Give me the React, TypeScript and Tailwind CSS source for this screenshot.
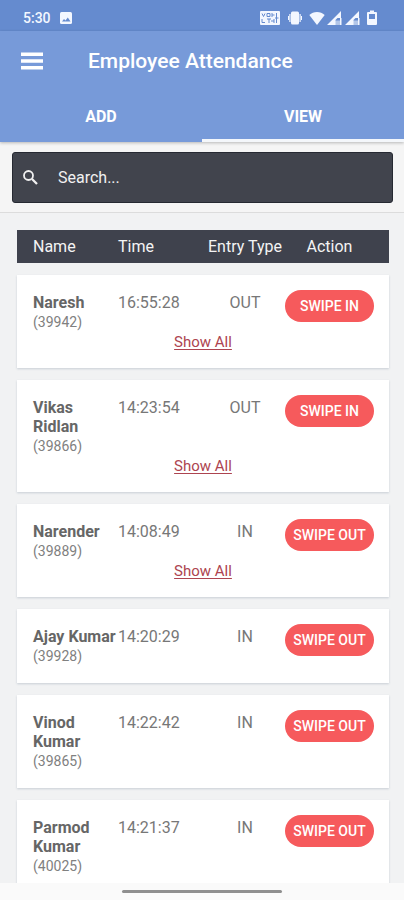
import React, { useState } from 'react'

type Entry = {
  id: number;
  name: string;
  time: string;
  type: 'IN' | 'OUT';
  showAll?: boolean;
};

const entries: Entry[] = [
  { id: 39942, name: 'Naresh', time: '16:55:28', type: 'OUT', showAll: true },
  { id: 39866, name: 'Vikas Ridlan', time: '14:23:54', type: 'OUT', showAll: true },
  { id: 39889, name: 'Narender', time: '14:08:49', type: 'IN', showAll: true },
  { id: 39928, name: 'Ajay Kumar', time: '14:20:29', type: 'IN' },
  { id: 39865, name: 'Vinod Kumar', time: '14:22:42', type: 'IN' },
  { id: 40025, name: 'Parmod Kumar', time: '14:21:37', type: 'IN' },
];

const SignalIcon = () => (
  <svg width="15" height="14" viewBox="0 0 15 14" fill="currentColor" aria-hidden="true">
    <path d="M0 14 14 0v7h-3.500l-2 2v5z" />
    <path d="M8 9.500h6v4.500H8z" opacity=".55" />
    <path d="M13 7h1.500v7H13z" />
  </svg>
);

const StatusBar = () => (
  <div className="flex h-[31px] shrink-0 items-center justify-between bg-[#658bcf] pt-1 pr-[26px] pl-[23px] text-[#f3f7ff]">
    <div className="flex items-center gap-2">
      <span className="text-sm leading-5 font-medium">5:30</span>
      <svg width="14" height="14" viewBox="0 0 14 14" aria-hidden="true">
        <rect x="1" y="1" width="12" height="12" rx="1.500" fill="currentColor" />
        <path d="M3 10.500 5 8l1.500 1.500L8.800 6.500 11.500 10.500z" fill="#658bcf" />
      </svg>
    </div>
    <div className="flex items-center">
      {/* VoLTE */}
      <svg className="mr-2" width="20" height="14" viewBox="0 0 20 14" aria-hidden="true">
        <rect width="20" height="14" rx="1" fill="currentColor" />
        <path d="M2 2.500l1.500 3L5 2.500M7 2.500h3v3H7zM12 2v4M12 4h2.500M2 8v3.500h3M7 8h4M9 8v4M11 10h3M14 8v4M16.500 2v10M15 7h3.500" fill="none" stroke="#658bcf" />
      </svg>
      {/* vibrate */}
      <svg className="mr-[7px]" width="14" height="14" viewBox="0 0 14 14" fill="currentColor" aria-hidden="true">
        <rect x="3" y="0.500" width="8" height="13" rx="1.500" />
        <path d="M1.300 3h1.200v8H1.300zM11.500 3h1.200v8h-1.200zM0 5h1v4H0zM13 5h1v4h-1z" />
      </svg>
      {/* wifi */}
      <svg className="mr-[2px]" width="16" height="14" viewBox="0 0 16 14" fill="currentColor" aria-hidden="true">
        <path d="M8 14 .3 4C2.500 2 5 1 8 1s5.500 1 7.700 3z" />
      </svg>
      <div className="flex gap-[3px]">
        <SignalIcon />
        <SignalIcon />
      </div>
      {/* battery */}
      <svg className="ml-[6px]" width="12" height="16" viewBox="0 0 12 16" aria-hidden="true">
        <path d="M4 .5h4V2h2a1 1 0 0 1 1 1v11a1 1 0 0 1-1 1H2a1 1 0 0 1-1-1V3a1 1 0 0 1 1-1h2z" fill="currentColor" />
        <path d="M3 4h6v5H3z" fill="#658bcf" />
      </svg>
    </div>
  </div>
);

const EntryCard = ({ entry }: { entry: Entry }) => (
  <tbody className="mt-3 block bg-white pb-4 shadow-[0_1px_2px_rgba(140,155,170,0.4)]">
    <tr className="grid grid-cols-[85px_1fr_80px_89px] pt-[15px] pr-[15px] pl-4">
      <td className="pt-[3px]">
        <div className="text-base leading-[19px] font-bold text-[#666]">{entry.name}</div>
        <div className="pb-px text-sm leading-5 text-[#808080]">({entry.id})</div>
      </td>
      <td className="pt-[3px] text-base leading-[19px]">{entry.time}</td>
      <td className="pt-[3px] text-center text-base leading-[19px]">{entry.type}</td>
      <td>
        <button
          type="button"
          className="h-8 w-full rounded-full bg-[#f65a5c] text-sm font-medium whitespace-nowrap text-white"
        >
          {entry.type === 'OUT' ? 'SWIPE IN' : 'SWIPE OUT'}
        </button>
      </td>
    </tr>
    {entry.showAll && (
      <tr className="block">
        <td colSpan={4} className="block text-center text-[15px] leading-[19px]">
          <a href="#" className="text-[#ad4450] underline underline-offset-2">Show All</a>
        </td>
      </tr>
    )}
  </tbody>
);

export default function App() {
  const [tab, setTab] = useState('VIEW');
  const [search, setSearch] = useState('');

  const visible = entries.filter((entry) =>
    entry.name.toLowerCase().includes(search.toLowerCase())
  );

  return (
    <div className="flex h-screen flex-col bg-[#f1f2f3] font-[Roboto,sans-serif]">
      <StatusBar />

      <header className="z-10 shrink-0 bg-[#779ad9] text-white shadow-[0_1px_3px_rgba(0,0,0,0.25)]">
        <div className="flex h-[60px] items-center pl-[21px]">
          <button type="button" aria-label="Menu" className="mr-[45px]">
            <svg width="22" height="18" viewBox="0 0 22 18" fill="currentColor" aria-hidden="true">
              <path d="M0 .5h22v3.500H0zM0 7.300h22v3.500H0zM0 14h22v3.500H0z" />
            </svg>
          </button>
          <h1 className="text-[21px] leading-7 font-medium">Employee Attendance</h1>
        </div>
        <nav className="flex">
          {['ADD', 'VIEW'].map((name) => (
            <button
              key={name}
              type="button"
              onClick={() => setTab(name)}
              className={
                tab === name
                  ? 'h-[51px] flex-1 border-b-3 border-[#f4f7fb] pt-1 text-base font-bold'
                  : 'h-[51px] flex-1 border-b-3 border-transparent pt-1 text-base font-bold'
              }
            >
              {name}
            </button>
          ))}
        </nav>
      </header>

      <div className="shrink-0 border-b border-[#dcdcdc] bg-[#f5f5f5] pt-[10px] pr-[11px] pb-[9px] pl-3">
        <label className="flex h-[51px] items-center gap-[19px] rounded-[3px] border border-[#262932] bg-[#41444d] pr-3 pl-[9px] text-[#f1f1f1]">
          <svg width="17" height="17" viewBox="0 0 17 17" fill="none" stroke="currentColor" aria-hidden="true">
            <circle cx="6.500" cy="6.500" r="4.500" strokeWidth="1.800" />
            <path d="m10 10 5 5" strokeWidth="2.300" />
          </svg>
          <input
            type="text"
            aria-label="Search"
            placeholder="Search..."
            value={search}
            onChange={(e) => setSearch(e.target.value)}
            className="min-w-0 flex-1 bg-transparent text-base outline-none placeholder:text-[#f1f1f1]"
          />
        </label>
      </div>

      <main className="min-h-0 flex-1 overflow-y-auto pt-[17px] pr-[15px] pl-[17px] [scrollbar-width:none]">
        <table className="block text-[#777]">
          <thead className="block bg-[#3f424d] text-base text-[#f4f4f4]">
            <tr className="grid h-[33px] grid-cols-[85px_1fr_80px_89px] items-center pr-[15px] pl-4">
              <th className="text-left font-normal">Name</th>
              <th className="text-left font-normal">Time</th>
              <th className="font-normal whitespace-nowrap">Entry Type</th>
              <th className="font-normal">Action</th>
            </tr>
          </thead>
          {visible.map((entry) => (
            <EntryCard key={entry.id} entry={entry} />
          ))}
        </table>
      </main>

      <footer className="flex h-[17px] shrink-0 items-center justify-center bg-[#fafafa]">
        <div className="h-[3px] w-40 rounded-full bg-[#8f8f8f]" />
      </footer>
    </div>
  );
}
